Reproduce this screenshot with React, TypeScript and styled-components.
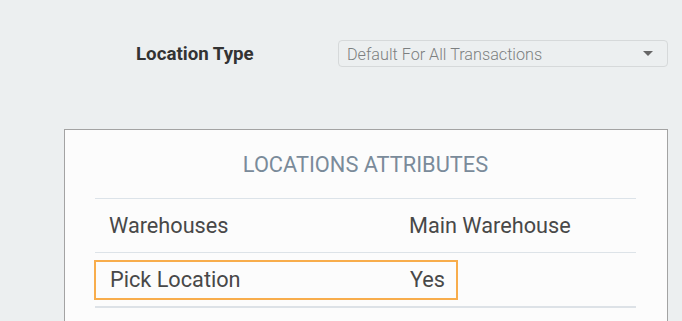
import React from "react";
import styled, { createGlobalStyle } from "styled-components";

const GlobalStyle = createGlobalStyle`
  html, body {
    margin: 0;
    padding: 0;
    background: #eceff0;
    font-family: Roboto, "Liberation Sans", sans-serif;
  }
`;

const Page = styled.div`
  width: 682px;
  height: 321px;
  overflow: hidden;
  padding: 40px 14px 0 64px;
  box-sizing: border-box;
`;

const FieldRow = styled.div`
  display: flex;
  align-items: center;
  height: 27px;
  padding-left: 72px;
`;

const FieldLabel = styled.label`
  font-size: 18.7px;
  font-weight: 700;
  color: #333;
`;

const Select = styled.div`
  margin-left: auto;
  width: 330px;
  height: 27px;
  box-sizing: border-box;
  border: 1px solid #d6d9da;
  border-radius: 4px;
  display: flex;
  align-items: center;
  padding: 2px 14px 0 8px;
  font-size: 16.2px;
  font-weight: 300;
  color: #7c7f80;
`;

const Caret = styled.span`
  margin-left: auto;
  margin-bottom: 2px;
  width: 0;
  height: 0;
  border-left: 5px solid transparent;
  border-right: 5px solid transparent;
  border-top: 5px solid #666;
`;

const Panel = styled.section`
  margin-top: 62px;
  background: #fcfcfc;
  border: 1px solid #a3a3a3;
  border-bottom: none;
  padding: 0 31px 0 30px;
  height: 200px;
`;

const PanelTitle = styled.h3`
  margin: 0;
  height: 68px;
  display: flex;
  align-items: center;
  justify-content: center;
  font-size: 21.8px;
  font-weight: 400;
  color: #7a8b9a;
  text-transform: uppercase;
  border-bottom: 1px solid #dce3e9;
`;

const Row = styled.div<{ $highlight?: boolean }>`
  display: flex;
  align-items: center;
  height: 53px;
  border-bottom: ${({ $highlight }) =>
    $highlight ? "2px solid #dde2e7" : "1px solid #dde3e8"};
`;

const Highlight = styled.div`
  display: flex;
  align-items: center;
  width: 364px;
  height: 40px;
  box-sizing: border-box;
  border: 2px solid #f8ad4c;
  margin-left: -1px;
`;

const Cell = styled.span<{ $value?: boolean }>`
  font-size: 21.7px;
  color: #484848;
  padding-left: ${({ $value }) => ($value ? "0" : "14px")};
  width: ${({ $value }) => ($value ? "auto" : "300px")};
`;

export default function App() {
  return (
    <Page>
      <GlobalStyle />
      <FieldRow>
        <FieldLabel>Location Type</FieldLabel>
        <Select>
          Default For All Transactions
          <Caret />
        </Select>
      </FieldRow>
      <Panel>
        <PanelTitle>Locations Attributes</PanelTitle>
        <Row>
          <Cell>Warehouses</Cell>
          <Cell $value>Main Warehouse</Cell>
        </Row>
        <Row $highlight>
          <Highlight>
            <Cell>Pick Location</Cell>
            <Cell $value>Yes</Cell>
          </Highlight>
        </Row>
      </Panel>
    </Page>
  );
}
